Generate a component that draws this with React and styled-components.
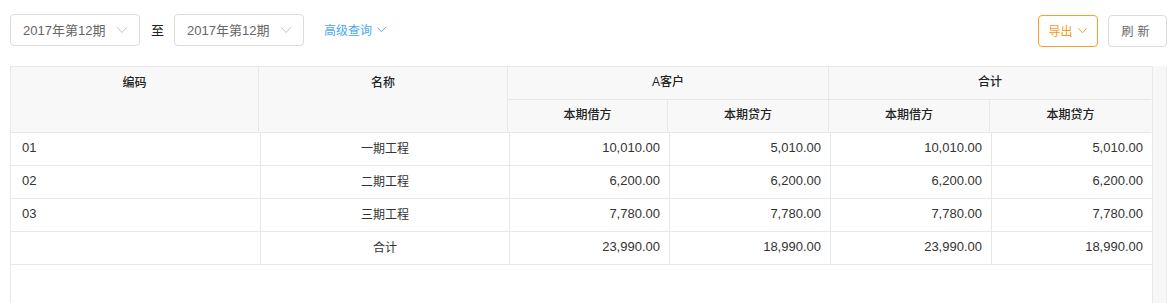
import React from "react";
import styled, { createGlobalStyle } from "styled-components";

const Global = createGlobalStyle`
  html, body { margin: 0; padding: 0; background: #fff; }
  body {
    font-family: "Helvetica Neue", "Liberation Sans", "Noto Sans CJK SC", sans-serif;
    font-size: 12px;
    color: #333;
  }
  * { box-sizing: border-box; }
`;

const Page = styled.div`
  padding: 14px 7px 0 10px;
  height: 303px;
  overflow: hidden;
  display: flex;
  flex-direction: column;
  gap: 20px;
`;

const Toolbar = styled.div`
  display: flex;
  align-items: center;
  height: 32px;
`;

const Select = styled.div`
  width: 130px;
  height: 32px;
  border: 1px solid #dcdcdc;
  border-radius: 4px;
  display: flex;
  align-items: center;
  justify-content: space-between;
  padding: 0 11px 1px 12px;
  color: #666;
  font-size: 13px;
`;

const Sep = styled.span`
  margin: 0 10px 2px 11px;
  color: #222;
  font-size: 13px;
`;

const Link = styled.span`
  margin-left: 20px;
  margin-bottom: 2px;
  color: #49a9ee;
  font-size: 12px;
  display: flex;
  align-items: center;
  gap: 4px;
`;

const Spacer = styled.div`
  flex: 1;
`;

const Button = styled.div`
  height: 32px;
  width: ${(p) => p.$w}px;
  margin-left: ${(p) => p.$ml || 0}px;
  margin-top: 1px;
  border: 1px solid ${(p) => (p.$primary ? "#f7a12b" : "#dcdcdc")};
  color: ${(p) => (p.$primary ? "#f59a23" : "#666")};
  border-radius: 4px;
  display: flex;
  align-items: center;
  justify-content: center;
  gap: 4px;
  padding-bottom: 1px;
  font-size: 12px;
  letter-spacing: ${(p) => p.$ls || 0}px;
`;

const TableArea = styled.div`
  flex: 1;
  display: flex;
`;

const TableBox = styled.div`
  width: 1143px;
  border-left: 1px solid #e8e8e8;
  border-right: 1px solid #e8e8e8;
  border-top: 1px solid #e8e8e8;
  display: flex;
  flex-direction: column;
`;

const Scrollbar = styled.div`
  width: 14px;
  background: #f7f7f7;
  border-right: 1px solid #ececec;
`;

const HeadGrid = styled.div`
  display: grid;
  grid-template-columns: 248px 249px 160px 161px 161px 161px;
  grid-template-rows: 33px 33px;
  background: #f8f8f8;
`;

const HeadCell = styled.div`
  grid-column: ${(p) => p.$col};
  grid-row: ${(p) => p.$row};
  border-right: ${(p) => (p.$last ? "none" : "1px solid #e8e8e8")};
  border-bottom: 1px solid #e8e8e8;
  display: flex;
  justify-content: center;
  align-items: ${(p) => (p.$top ? "flex-start" : "center")};
  padding-top: ${(p) => (p.$top ? "9px" : "0")};
  padding-bottom: ${(p) => (p.$top ? "0" : "2px")};
  line-height: 14px;
  font-weight: 500;
  color: #222;
  font-size: 12px;
`;

const BodyGrid = styled.div`
  display: grid;
  grid-template-columns: 250px 249px 160px 161px 161px 160px;
  grid-auto-rows: 33px;
`;

const Cell = styled.div`
  border-right: ${(p) => (p.$last ? "none" : "1px solid #e8e8e8")};
  border-bottom: 1px solid #e8e8e8;
  display: flex;
  align-items: center;
  justify-content: ${(p) =>
    p.$align === "right" ? "flex-end" : p.$align === "center" ? "center" : "flex-start"};
  padding: 0 ${(p) => (p.$align === "right" ? "9px" : "11px")}
    ${(p) => (p.$align === "center" ? "0" : "3px")};
  line-height: 15px;
  font-size: ${(p) => (p.$align === "center" ? "12px" : "13px")};
  color: #333;
`;

const Chevron = ({ color = "#c8c8c8", size = 12 }) => (
  <svg width={size} height={size} viewBox="0 0 12 12" fill="none">
    <path d="M1.5 3.5 L6 8.5 L10.5 3.5" stroke={color} strokeWidth="1" />
  </svg>
);

const rows = [
  ["01", "一期工程", "10,010.00", "5,010.00", "10,010.00", "5,010.00"],
  ["02", "二期工程", "6,200.00", "6,200.00", "6,200.00", "6,200.00"],
  ["03", "三期工程", "7,780.00", "7,780.00", "7,780.00", "7,780.00"],
  ["", "合计", "23,990.00", "18,990.00", "23,990.00", "18,990.00"],
];

export default function App() {
  return (
    <>
      <Global />
      <Page>
        <Toolbar>
          <Select>
            <span>2017年第12期</span>
            <Chevron />
          </Select>
          <Sep>至</Sep>
          <Select>
            <span>2017年第12期</span>
            <Chevron />
          </Select>
          <Link>
            高级查询
            <Chevron color="#49a9ee" size={11} />
          </Link>
          <Spacer />
          <Button $primary $w={60}>
            导出
            <Chevron color="#f59a23" size={11} />
          </Button>
          <Button $w={59} $ml={10} $ls={4}>
            刷新
          </Button>
        </Toolbar>
        <TableArea>
          <TableBox>
            <HeadGrid>
              <HeadCell $col="1" $row="1 / span 2" $top>编码</HeadCell>
              <HeadCell $col="2" $row="1 / span 2" $top>名称</HeadCell>
              <HeadCell $col="3 / span 2" $row="1">A客户</HeadCell>
              <HeadCell $col="5 / span 2" $row="1" $last>合计</HeadCell>
              <HeadCell $col="3" $row="2">本期借方</HeadCell>
              <HeadCell $col="4" $row="2">本期贷方</HeadCell>
              <HeadCell $col="5" $row="2">本期借方</HeadCell>
              <HeadCell $col="6" $row="2" $last>本期贷方</HeadCell>
            </HeadGrid>
            <BodyGrid>
              {rows.map((r, i) => (
                <React.Fragment key={i}>
                  <Cell>{r[0]}</Cell>
                  <Cell $align="center">{r[1]}</Cell>
                  <Cell $align="right">{r[2]}</Cell>
                  <Cell $align="right">{r[3]}</Cell>
                  <Cell $align="right">{r[4]}</Cell>
                  <Cell $align="right" $last>{r[5]}</Cell>
                </React.Fragment>
              ))}
            </BodyGrid>
          </TableBox>
          <Scrollbar />
        </TableArea>
      </Page>
    </>
  );
}
